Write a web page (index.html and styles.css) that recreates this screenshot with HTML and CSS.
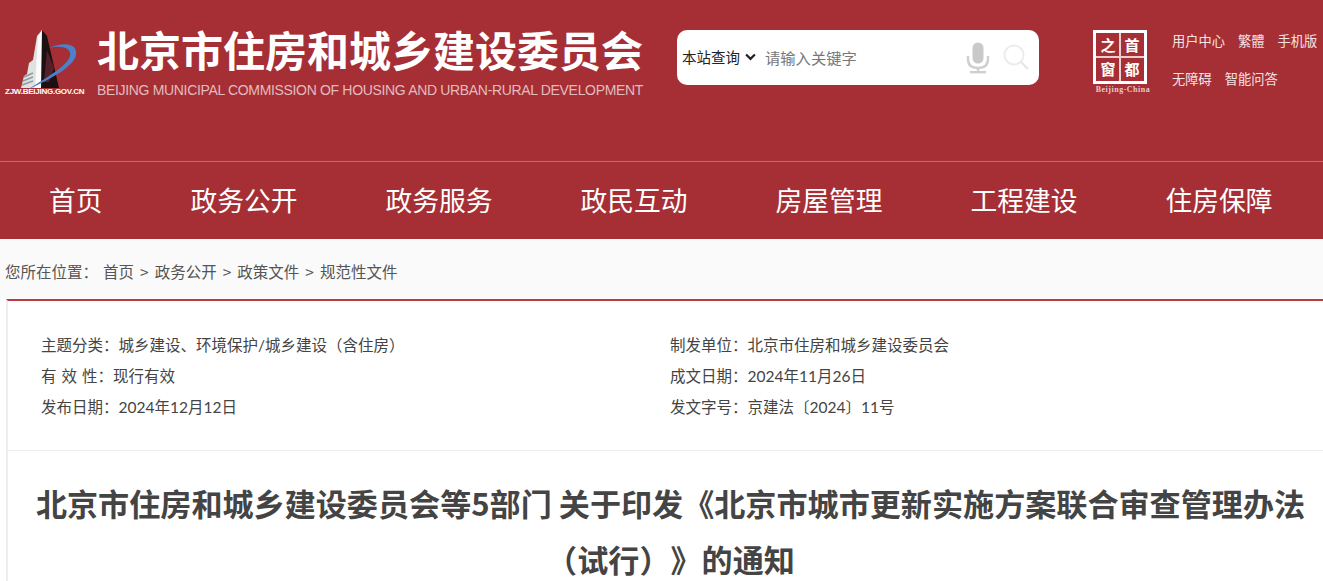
FILE: index.html
```html
<!DOCTYPE html>
<html lang="zh-CN">
<head>
  <meta charset="UTF-8">
  <title>北京市住房和城乡建设委员会</title>
  <link rel="stylesheet" href="styles.css">
</head>
<body>
  <header class="top-bar">
    <div class="site-logo">
      <svg class="site-logo-mark" viewBox="0 0 84 60" width="84" height="60">
        <polygon points="37,0 32,6 28,30 24,33 22,44 19,46 16,58 37,58" fill="#dfe2e2"/>
        <polygon points="37,0 33,7 30,58 37,58" fill="#fbfbfb"/>
        <path d="M19 47 L28 43 M18 51 L28 47 M17 55 L28 51" stroke="#8f9ba0" stroke-width="1.4"/>
        <polygon points="37,0 42,6 54,58 36,58" fill="#1d1013"/>
        <polygon points="42,20 49,38 44,52 39,52" fill="#54202a"/>
        <path d="M44 18 C60 11 73 14 71 25 C69 36 48 48 22 60 C44 46 62 36 65 26 C67 18 56 15 44 18 Z" fill="#4c80c8"/>
      </svg>
      <span class="site-logo-url">ZJW.BEIJING.GOV.CN</span>
    </div>
    <div class="site-name">
      <h1>北京市住房和城乡建设委员会</h1>
      <p>BEIJING MUNICIPAL COMMISSION OF HOUSING AND URBAN-RURAL DEVELOPMENT</p>
    </div>
    <div class="search-box">
      <span class="search-scope">本站查询
        <svg viewBox="0 0 10 7" width="11" height="8"><path d="M1 1.2 L5 5.2 L9 1.2" fill="none" stroke="#222" stroke-width="2"/></svg>
      </span>
      <span class="search-hint">请输入关键字</span>
      <svg class="mic-icon" viewBox="0 0 24 32" width="24" height="32">
        <rect x="6.5" y="0.5" width="11" height="21" rx="5.5" fill="#c9c9c9"/>
        <path d="M2 14 V17 C2 23 6 26 12 26 C18 26 22 23 22 17 V14" fill="none" stroke="#cfcfcf" stroke-width="2.4"/>
        <rect x="10.8" y="26" width="2.4" height="3.5" fill="#cfcfcf"/>
        <rect x="4" y="29" width="16" height="2.4" fill="#cfcfcf"/>
      </svg>
      <svg class="find-icon" viewBox="0 0 26 26" width="26" height="26">
        <circle cx="11" cy="11" r="9.5" fill="none" stroke="#ececec" stroke-width="2"/>
        <path d="M18 18 L25 25" stroke="#e6e6e6" stroke-width="2.2"/>
      </svg>
    </div>
    <div class="capital-seal">
      <div class="capital-seal-box">
        <span>之</span><span>首</span><span>窗</span><span>都</span>
      </div>
      <span class="capital-seal-label">Beijing-China</span>
    </div>
    <div class="top-links">
      <div class="top-links-row"><a>用户中心</a><a>繁體</a><a>手机版</a></div>
      <div class="top-links-row"><a>无障碍</a><a>智能问答</a></div>
    </div>
  </header>

  <nav class="main-nav">
    <a>首页</a>
    <a>政务公开</a>
    <a>政务服务</a>
    <a>政民互动</a>
    <a>房屋管理</a>
    <a>工程建设</a>
    <a>住房保障</a>
  </nav>

  <div class="crumbs">
    <span class="crumbs-label">您所在位置：</span>
    <a>首页</a><i>&gt;</i><a>政务公开</a><i>&gt;</i><a>政策文件</a><i>&gt;</i><a>规范性文件</a>
  </div>

  <main class="article">
    <div class="doc-info">
      <div class="doc-info-item"><b>主题分类：</b>城乡建设、环境保护/城乡建设（含住房）</div>
      <div class="doc-info-item"><b>制发单位：</b>北京市住房和城乡建设委员会</div>
      <div class="doc-info-item"><b>有 效 性：</b>现行有效</div>
      <div class="doc-info-item"><b>成文日期：</b>2024年11月26日</div>
      <div class="doc-info-item"><b>发布日期：</b>2024年12月12日</div>
      <div class="doc-info-item"><b>发文字号：</b>京建法〔2024〕11号</div>
    </div>
    <h2 class="article-title">北京市住房和城乡建设委员会等5部门 关于印发《北京市城市更新实施方案联合审查管理办法（试行）》的通知</h2>
  </main>
</body>
</html>
```

FILE: styles.css
```css
* {
  box-sizing: border-box;
  margin: 0;
  padding: 0;
}

html, body {
  height: 581px;
  overflow: hidden;
}

body {
  font-family: "Noto Sans CJK SC", "Liberation Sans", sans-serif;
  background: #fff;
  color: #444;
  text-spacing-trim: space-all;
}

/* header */
.top-bar {
  display: flex;
  align-items: flex-start;
  height: 162px;
  background: #a62f35;
  border-bottom: 1px solid #c06c70;
}

.site-logo {
  width: 97px;
  padding: 30px 0 0 5px;
}

.site-logo-mark {
  display: block;
}

.site-logo-url {
  display: block;
  margin-top: -3px;
  font-family: "Liberation Sans", sans-serif;
  font-size: 8px;
  font-weight: bold;
  letter-spacing: -0.25px;
  color: #fff;
  white-space: nowrap;
}

.site-name {
  width: 547px;
  padding-top: 19px;
  white-space: nowrap;
}

.site-name h1 {
  font-size: 42px;
  line-height: 60px;
  color: #fff;
}

.site-name p {
  font-family: "Liberation Sans", sans-serif;
  font-size: 14px;
  line-height: 22px;
  letter-spacing: -0.33px;
  color: #e3bcbf;
}

.search-box {
  display: flex;
  align-items: center;
  width: 362px;
  height: 55px;
  margin: 30px 0 0 33px;
  padding: 0 10px 2px 5px;
  background: #fff;
  border-radius: 10px;
}

.search-scope {
  display: flex;
  align-items: center;
  gap: 5px;
  font-size: 14.5px;
  color: #222;
  white-space: nowrap;
}

.search-hint {
  flex: 1;
  margin-left: 9px;
  font-size: 15.3px;
  color: #777;
}

.mic-icon {
  margin: 2px 13px 0 0;
}

.capital-seal {
  width: 60px;
  margin: 30px 0 0 54px;
  text-align: center;
}

.capital-seal-box {
  display: grid;
  grid-template-columns: 1fr 1fr;
  grid-template-rows: 1fr 1fr;
  width: 54px;
  height: 54px;
  border: 3px solid #fff;
  background: linear-gradient(#e9cfd0, #e9cfd0) center / 100% 2px no-repeat,
    linear-gradient(#e9cfd0, #e9cfd0) center / 2px 100% no-repeat;
}

.capital-seal-box span {
  font-size: 15px;
  font-weight: bold;
  line-height: 23px;
  color: #fff;
  text-align: center;
}

.capital-seal-label {
  display: block;
  font-family: "Liberation Serif", serif;
  font-size: 8px;
  font-weight: bold;
  letter-spacing: 0.5px;
  line-height: 12px;
  color: #e6c9ca;
  white-space: nowrap;
}

.top-links {
  margin: 32px 0 0 19px;
}

.top-links-row {
  display: flex;
  gap: 13px;
  height: 38px;
  font-size: 13.25px;
  line-height: 18px;
  color: #f4e3e3;
  white-space: nowrap;
}

/* nav */
.main-nav {
  display: flex;
  gap: 88px;
  height: 77px;
  padding-left: 49px;
  background: #a62f35;
  font-size: 26.75px;
  line-height: 76px;
  color: #fff;
  white-space: nowrap;
}

/* breadcrumb */
.crumbs {
  display: flex;
  align-items: center;
  height: 60px;
  padding: 4px 0 0 5px;
  background: #fafafa;
  font-size: 15.5px;
  color: #555;
}

.crumbs-label {
  margin-right: 5px;
}

.crumbs i {
  margin: 0 6px;
  font-style: normal;
}

/* article */
.article {
  margin-left: 6px;
  background: #fff;
  border-top: 2px solid #b83c42;
  border-left: 2px solid #eeeeea;
}

.doc-info {
  display: grid;
  grid-template-columns: 629px 1fr;
  grid-auto-rows: 31px;
  align-items: center;
  height: 150px;
  padding: 27px 0 0 33px;
  border-bottom: 1px solid #eeeeea;
  font-family: Lato, "Noto Sans CJK SC", sans-serif;
  font-size: 15.5px;
  color: #444;
}

.doc-info-item {
  white-space: nowrap;
}

.doc-info-item b {
  font-weight: normal;
  word-spacing: 1px;
}

.article-title {
  padding: 24px 0 0 10px;
  font-size: 31.1px;
  line-height: 56px;
  text-align: center;
  color: #444;
}
```
